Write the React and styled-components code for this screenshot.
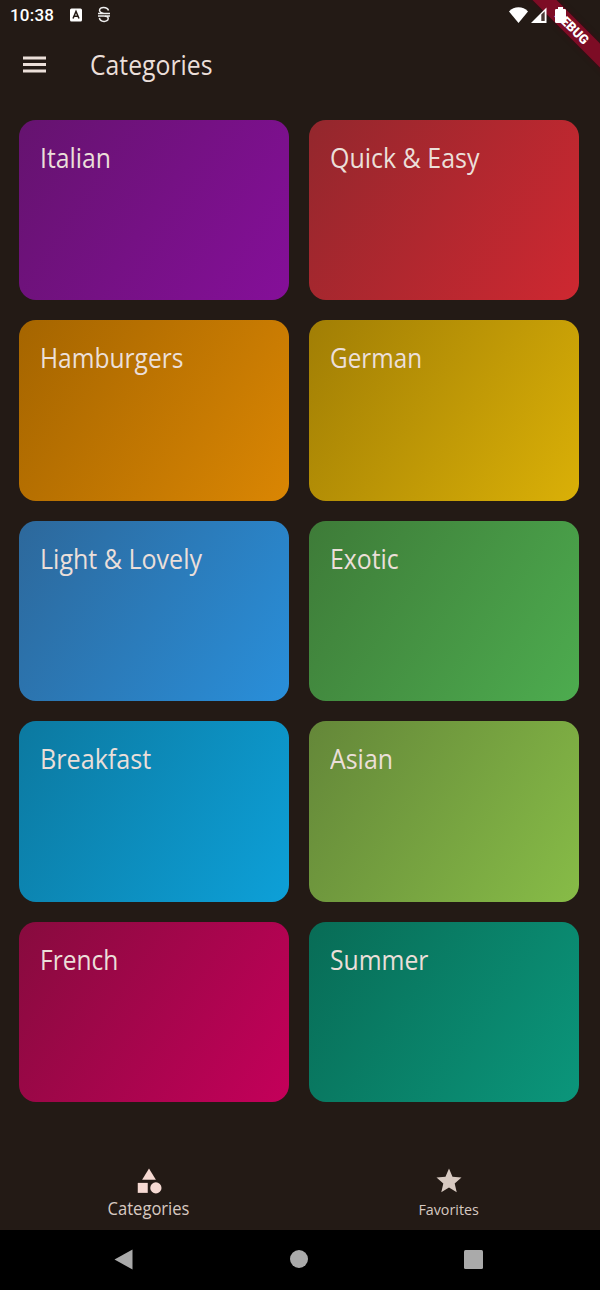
import React from "react";
import styled, { createGlobalStyle } from "styled-components";

const GlobalStyle = createGlobalStyle`
  * { box-sizing: border-box; }
  body { margin: 0; background: #231a15; }
`;

const Screen = styled.div`
  position: relative;
  display: flex;
  flex-direction: column;
  width: 600px;
  height: 1290px;
  overflow: hidden;
  background: #231a15;
  color: #ebdfd9;
  font-family: "Open Sans", "Noto Sans", sans-serif;
`;

const StatusBar = styled.header`
  position: relative;
  z-index: 2;
  display: flex;
  align-items: center;
  height: 30px;
  padding: 0 34px 0 10px;
  color: #fff;
`;

const Clock = styled.time`
  width: 60px;
  font: 500 17px/30px Roboto, sans-serif;
  letter-spacing: 0.2px;
`;

const StatusIcons = styled.div`
  display: flex;
  align-items: center;
  gap: ${(p) => p.$gap}px;
  margin-left: ${(p) => (p.$end ? "auto" : "0")};
  margin-top: -1px;
  svg { display: block; }
`;

const BatterySlot = styled.div`
  margin-left: 5px;
`;

const DebugBanner = styled.div`
  position: absolute;
  top: 19px;
  right: -42px;
  width: 140px;
  height: 17px;
  transform: rotate(45deg);
  background: #7d0c25;
  box-shadow: 0 0 5px rgba(70, 5, 20, 0.7);
  color: #fff;
  font: 900 13px/17px Roboto, sans-serif;
  text-align: center;
`;

const AppBar = styled.div`
  display: flex;
  align-items: center;
  height: 70px;
  padding: 0 23px 1px;
  gap: 44px;
  svg { display: block; }
`;

const Fitted = styled.span`
  display: inline-block;
  white-space: nowrap;
  transform: scaleX(${(p) => p.$fit || 1});
  transform-origin: ${(p) => p.$origin || "left"} center;
`;

const Title = styled.h1`
  margin: 0;
  font-size: 27.5px;
  line-height: 36px;
  font-weight: 400;
`;

const Grid = styled.main`
  display: grid;
  grid-template-columns: 270px 270px;
  grid-auto-rows: 180.2px;
  gap: 20.3px 20px;
  padding: 20px 19.4px 0;
  flex: 1;
`;

const Card = styled.article`
  padding: 20px 20px 20px 20.4px;
  border-radius: 17px;
  background: linear-gradient(123.7deg, ${(p) => p.$from}, ${(p) => p.$to});
  font-size: 27.5px;
  line-height: 36px;
`;

const Tabs = styled.nav`
  display: grid;
  grid-template-columns: 1fr 1fr;
  height: 80px;
`;

const Tab = styled.div`
  display: flex;
  flex-direction: column;
  align-items: center;
  padding: 15.5px 2px 0 0;
  color: ${(p) => (p.$active ? "#f5d9d2" : "#d7c9c1")};
  svg { display: block; }
`;

const TabLabel = styled.span`
  font-size: ${(p) => (p.$active ? 18 : 14)}px;
  line-height: 24px;
  margin-top: ${(p) => (p.$active ? 0 : 2)}px;
  color: #d7c9c1;
`;

const SystemBar = styled.footer`
  display: flex;
  align-items: center;
  justify-content: space-between;
  height: 60px;
  padding: 0 117px 2px 114px;
  background: #000;
  color: #aaa;
  svg { display: block; }
`;

const categories = [
  { name: "Italian", from: "#65136f", to: "#850f99", fit: 0.9 },
  { name: "Quick & Easy", from: "#93272d", to: "#ce2831", fit: 0.908 },
  { name: "Hamburgers", from: "#a56500", to: "#da8603", fit: 0.893 },
  { name: "German", from: "#a17e05", to: "#dab007", fit: 0.883 },
  { name: "Light & Lovely", from: "#2d689b", to: "#298fda", fit: 0.91 },
  { name: "Exotic", from: "#3e7b38", to: "#4dac4f", fit: 0.903 },
  { name: "Breakfast", from: "#0c79a0", to: "#0da0d8", fit: 0.915 },
  { name: "Asian", from: "#648739", to: "#87bc47", fit: 0.905 },
  { name: "French", from: "#870b3e", to: "#c4005a", fit: 0.893 },
  { name: "Summer", from: "#086c56", to: "#0b967b", fit: 0.898 },
];

const InputIcon = () => (
  <svg width="13" height="14" viewBox="0 0 13 14">
    <rect y="0.5" width="12" height="13" rx="1.5" fill="#fff" />
    <path d="M3 10.5 6 3.5 9 10.5M4.2 8.2H7.8" fill="none" stroke="#231a15" strokeWidth="1.5" />
  </svg>
);

const StrikeIcon = () => (
  <svg width="14" height="17" viewBox="0 0 14 17" fill="none" stroke="#eee" strokeWidth="1.5">
    <path d="M11.500 4.500C10.500.6 2.500.3 2.500 4.300c0 2 1.500 2.500 4.300 3.200h6.200M1 7.500h5M1 10h6c3 0 4.200.7 4.200 2.400 0 4.200-8.200 4-8.800-.5M8 10h5" />
  </svg>
);

const WifiIcon = () => (
  <svg width="19" height="16" viewBox="0 0 19 16" fill="#fff">
    <path d="M0 4.500C5-1.100 14-1.100 19 4.500L9.500 16Z" />
  </svg>
);

const SignalIcon = () => (
  <svg width="16" height="16" viewBox="0 0 16 16">
    <path d="M0 16 15.500.5V16Z" fill="#fff" />
    <path d="M10.300 7.500 13.700 4.200V14H10.300Z" fill="#4a3a36" />
  </svg>
);

const BatteryIcon = () => (
  <svg width="11" height="16" viewBox="0 0 11 16" fill="#fff">
    <path d="M3 0h5v2h1.700q1.300 0 1.300 1.300v11.400q0 1.300-1.300 1.300H1.300Q0 16 0 14.700V3.300Q0 2 1.300 2H3Z" />
  </svg>
);

const MenuIcon = () => (
  <svg width="23" height="17" viewBox="0 0 23 17" fill="#ebdfd9">
    <path d="M0 0.500h23v3H0zM0 7h23v3H0zM0 13.500h23v3H0z" />
  </svg>
);

const CategoryIcon = () => (
  <svg width="30" height="30" viewBox="0 0 24 24" fill="currentColor">
    <path d="m12 2-5.500 9h11z" />
    <circle cx="17.500" cy="17.500" r="4.500" />
    <path d="M3 13.500h8v8H3z" />
  </svg>
);

const StarIcon = () => (
  <svg width="30" height="30" viewBox="0 0 24 24" fill="currentColor">
    <path d="M12 17.270 18.180 21l-1.640-7.030L22 9.240l-7.190-.61L12 2 9.190 8.630 2 9.240l5.460 4.730L5.820 21z" />
  </svg>
);

export default function App() {
  return (
    <Screen>
      <GlobalStyle />
      <StatusBar>
        <Clock>10:38</Clock>
        <StatusIcons $gap={14}>
          <InputIcon />
          <StrikeIcon />
        </StatusIcons>
        <StatusIcons $gap={3} $end>
          <WifiIcon />
          <SignalIcon />
          <BatterySlot>
            <BatteryIcon />
          </BatterySlot>
        </StatusIcons>
      </StatusBar>
      <AppBar>
        <MenuIcon />
        <Title>
          <Fitted $fit={0.9}>Categories</Fitted>
        </Title>
      </AppBar>
      <Grid>
        {categories.map((c) => (
          <Card key={c.name} $from={c.from} $to={c.to}>
            <Fitted $fit={c.fit}>{c.name}</Fitted>
          </Card>
        ))}
      </Grid>
      <Tabs>
        <Tab $active>
          <CategoryIcon />
          <TabLabel $active>
            <Fitted $fit={0.92} $origin="center">Categories</Fitted>
          </TabLabel>
        </Tab>
        <Tab>
          <StarIcon />
          <TabLabel>
            <Fitted $fit={1.02} $origin="center">Favorites</Fitted>
          </TabLabel>
        </Tab>
      </Tabs>
      <SystemBar>
        <svg width="19" height="21" viewBox="0 0 19 21" fill="currentColor"><path d="M0.500 10.500 18.500 0.500v20z" /></svg>
        <svg width="18" height="18" viewBox="0 0 18 18" fill="currentColor"><circle cx="9" cy="9" r="9" /></svg>
        <svg width="19" height="19" viewBox="0 0 19 19" fill="currentColor"><rect width="19" height="19" rx="1.500" /></svg>
      </SystemBar>
      <DebugBanner>DEBUG</DebugBanner>
    </Screen>
  );
}
